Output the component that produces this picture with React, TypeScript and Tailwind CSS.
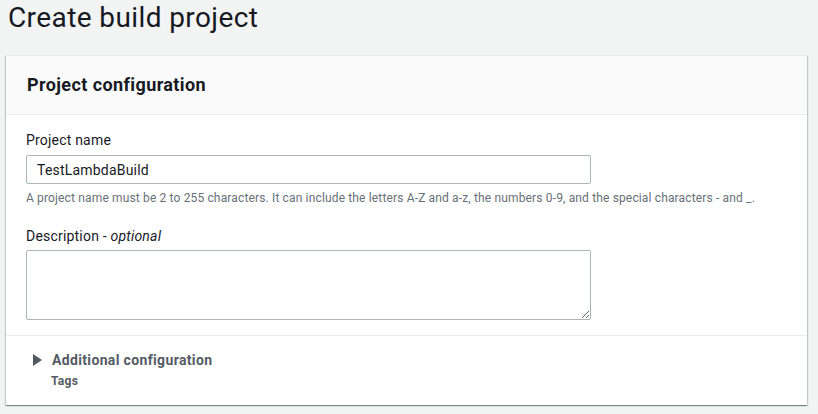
import React from 'react';

function App() {
    return (
        <div className="min-h-screen bg-[#f2f3f3] text-[#16191f] font-['Roboto',sans-serif]">
            {/* Page title */}
            <h1 className="pl-2 h-[55px] text-[28px] leading-[36px] font-normal tracking-[0.4px]">Create build project</h1>

            {/* Card */}
            <div className="ml-[6px] w-[801px] bg-white border-t border-[#eaeded] shadow-[0_1px_1px_0_rgba(0,28,36,0.3),1px_1px_1px_0_rgba(0,28,36,0.15),-1px_1px_1px_0_rgba(0,28,36,0.15)]">
                <div className="h-[59px] px-[21px] flex items-center bg-[#fafafa] border-b border-[#eaeded]">
                    <h2 className="text-[18px] leading-[22px] font-bold tracking-[0.4px]">Project configuration</h2>
                </div>

                <div className="px-5 pt-[14px] pb-[15px] tracking-[0.2px]">
                    <label className="block text-[14px] leading-[22px]">Project name</label>
                    <input
                        type="text"
                        defaultValue="TestLambdaBuild"
                        className="mt-1 block w-[565px] h-[29px] px-[10px] text-[14px] tracking-[0.2px] border border-[#aab7b8] rounded-[2px] outline-none"
                    />
                    <p className="mt-[6px] text-[12px] leading-[16px] tracking-[0.15px] text-[#687078]">
                        A project name must be 2 to 255 characters. It can include the letters A-Z and a-z, the numbers 0-9, and the special characters - and _.
                    </p>

                    <label className="block mt-[19px] text-[14px] leading-[22px]">
                        Description - <i>optional</i>
                    </label>
                    <textarea className="mt-[3px] block w-[565px] h-[70px] px-[10px] py-1 text-[14px] border border-[#aab7b8] rounded-[2px] outline-none" />
                </div>

                {/* Expandable section */}
                <div className="border-t border-[#eaeded] px-5 pt-[13px] pb-4">
                    <div className="flex items-center">
                        <svg width="9" height="12" viewBox="0 0 9 12" className="ml-[7px] mr-[10px] fill-[#545b64]">
                            <path d="M0 0 L9 6 L0 12 Z" />
                        </svg>
                        <span className="text-[14px] leading-[22px] font-bold tracking-[0.35px] text-[#545b64]">Additional configuration</span>
                    </div>
                    <div className="mt-[2px] pl-[25px] text-[12px] leading-[16px] font-bold tracking-[0.3px] text-[#545b64]">Tags</div>
                </div>
            </div>
        </div>
    );
}

export default App;
